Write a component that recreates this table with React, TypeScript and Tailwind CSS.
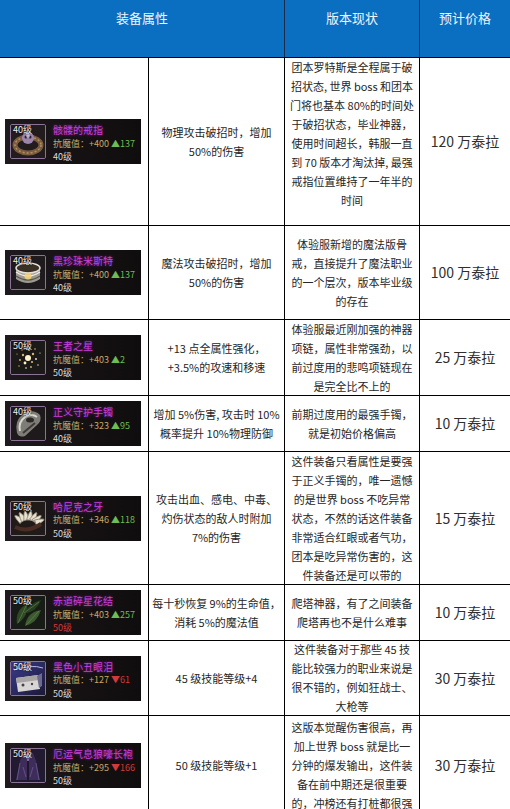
import * as React from 'react';

type Item = {
  name: string;
  level: string;
  stat: string;
  delta: string;
  up: boolean;
  redLevel?: boolean;
  icon: React.ReactNode;
};

type Row = {
  h: string;
  item: Item;
  effect: string[];
  status: string[];
  statusTop?: boolean;
  price: string;
};

const FONT = "font-['Noto_Sans_CJK_SC','Noto_Sans',sans-serif]";

function RingIcon() {
  return (
    <svg viewBox="0 0 34 33" className="h-full w-full">
      <rect width="34" height="33" fill="#231c1f" />
      <ellipse cx="17" cy="20" rx="13" ry="8" fill="none" stroke="#7a5c3e" strokeWidth="5" />
      <ellipse cx="17" cy="20" rx="13" ry="8" fill="none" stroke="#b48f62" strokeWidth="1.5" strokeDasharray="2 2" />
      <circle cx="17" cy="13" r="6" fill="#9c84ad" />
      <circle cx="15" cy="12" r="1.5" fill="#2b1f30" />
      <circle cx="19" cy="12" r="1.5" fill="#2b1f30" />
      <circle cx="17" cy="11" r="2" fill="#e6dcef" opacity="0.6" />
    </svg>
  );
}

function SilverRingIcon() {
  return (
    <svg viewBox="0 0 34 33" className="h-full w-full">
      <rect width="34" height="33" fill="#1f1a1d" />
      <path d="M5 12 L5 23 Q17 31 29 23 L29 12 Z" fill="#9d9a90" />
      <ellipse cx="17" cy="12" rx="12" ry="5" fill="#3a3025" stroke="#e2e0d8" strokeWidth="1.5" />
      <path d="M5 16 Q17 24 29 16" fill="none" stroke="#f0eee6" strokeWidth="1.5" />
      <path d="M5 20 Q17 28 29 20" fill="none" stroke="#5a5850" strokeWidth="1.5" />
      <circle cx="17" cy="20" r="3.5" fill="#f6d47a" opacity="0.85" />
    </svg>
  );
}

function StarIcon() {
  const dots = [
    [17, 17, 3], [12, 14, 1.2], [22, 13, 1.2], [14, 22, 1.4], [21, 21, 1.1], [9, 19, 0.9],
    [25, 18, 0.9], [18, 9, 1], [11, 9, 0.7], [27, 24, 0.7], [8, 25, 0.7], [24, 8, 0.8],
    [15, 27, 0.8], [20, 26, 0.9], [6, 13, 0.6], [29, 12, 0.6],
  ];
  return (
    <svg viewBox="0 0 34 33" className="h-full w-full">
      <rect width="34" height="33" fill="#1c1a18" />
      {dots.map(([x, y, r], i) => (
        <circle key={i} cx={x} cy={y} r={r} fill={i % 3 === 0 ? '#fff4c8' : '#d8b86a'} />
      ))}
    </svg>
  );
}

function BangleIcon() {
  return (
    <svg viewBox="0 0 34 33" className="h-full w-full">
      <rect width="34" height="33" fill="#1e1a1c" />
      <path d="M6 26 Q3 14 12 7 Q22 1 29 8 Q31 14 26 18 L14 29 Q8 31 6 26 Z" fill="#7f7d78" />
      <path d="M9 24 Q7 15 14 10 Q21 6 26 10" fill="none" stroke="#d9d7d0" strokeWidth="2" />
      <path d="M12 26 L24 16" stroke="#3d3a36" strokeWidth="2" />
      <ellipse cx="19" cy="13" rx="4" ry="2.5" fill="#2c2826" />
    </svg>
  );
}

function FangIcon() {
  const fangs = [-50, -30, -10, 10, 30, 50, 70];
  return (
    <svg viewBox="0 0 34 33" className="h-full w-full">
      <rect width="34" height="33" fill="#201a18" />
      {fangs.map((a, i) => (
        <path
          key={i}
          d="M-2 0 Q0 -14 2 0 Z"
          fill="#e8e2d2"
          stroke="#8f8674"
          strokeWidth="0.6"
          transform={`translate(${17 + Math.sin((a * Math.PI) / 180) * 8} ${22 - Math.cos((a * Math.PI) / 180) * 4}) rotate(${a}) scale(1.4 1.3)`}
        />
      ))}
      <path d="M4 25 Q17 31 30 22" fill="none" stroke="#4a2c22" strokeWidth="4" />
    </svg>
  );
}

function LeafIcon() {
  return (
    <svg viewBox="0 0 34 33" className="h-full w-full">
      <rect width="34" height="33" fill="#181c16" />
      <path d="M6 28 Q4 14 16 8 Q18 20 6 28 Z" fill="#2f4a26" />
      <path d="M14 30 Q16 16 30 14 Q26 27 14 30 Z" fill="#3b5a2f" />
      <path d="M12 18 Q20 6 30 4 Q26 16 12 18 Z" fill="#26401f" />
      <path d="M7 27 L15 10 M15 29 L28 15 M13 17 L28 6" stroke="#6e8c55" strokeWidth="0.6" />
    </svg>
  );
}

function ClownIcon() {
  return (
    <svg viewBox="0 0 34 33" className="h-full w-full">
      <defs>
        <linearGradient id="cl" x1="0" y1="0" x2="1" y2="1">
          <stop offset="0" stopColor="#3a3c8a" />
          <stop offset="1" stopColor="#1b1838" />
        </linearGradient>
      </defs>
      <rect width="34" height="33" fill="url(#cl)" />
      <path d="M3 8 Q20 2 32 6" fill="none" stroke="#b6b8e8" strokeWidth="1" />
      <path d="M5 16 L27 13 L29 27 L7 30 Z" fill="#d8d6d4" />
      <path d="M5 16 L27 13 L28 18 L6 21 Z" fill="#a8a4a6" />
      <circle cx="12" cy="23" r="1.5" fill="#4a3d45" />
      <circle cx="21" cy="22" r="1.2" fill="#4a3d45" />
      <path d="M26 14 L31 11 L31 24 L28 26" fill="#6d6a90" />
    </svg>
  );
}

function RobeIcon() {
  return (
    <svg viewBox="0 0 34 33" className="h-full w-full">
      <rect width="34" height="33" fill="#221a30" />
      <path d="M12 4 L22 4 L25 12 L29 31 L5 31 L9 12 Z" fill="#3e2d5a" />
      <path d="M14 4 L17 12 L20 4" fill="none" stroke="#8a78b0" strokeWidth="1" />
      <path d="M17 12 L17 31" stroke="#16101f" strokeWidth="1.5" />
      <path d="M9 14 L6 31 M25 14 L28 31" stroke="#6b5a90" strokeWidth="0.8" />
      <path d="M12 18 L15 28 M22 18 L19 28" stroke="#7a66a8" strokeWidth="0.6" />
    </svg>
  );
}

const rows: Row[] = [
  {
    h: 'h-[168px]',
    item: { name: '骸髅的戒指', level: '40级', stat: '+400', delta: '137', up: true, icon: <RingIcon /> },
    effect: ['物理攻击破招时，增加', '50%的伤害'],
    status: [
      '团本罗特斯是全程属于破',
      '招状态, 世界 boss 和团本',
      '门将也基本 80%的时间处',
      '于破招状态，毕业神器，',
      '使用时间超长，韩服一直',
      '到 70 版本才淘汰掉, 最强',
      '戒指位置维持了一年半的',
      '时间',
    ],
    statusTop: true,
    price: '120 万泰拉',
  },
  {
    h: 'h-[94px]',
    item: { name: '黑珍珠米斯特', level: '40级', stat: '+400', delta: '137', up: true, icon: <SilverRingIcon /> },
    effect: ['魔法攻击破招时，增加', '50%的伤害'],
    status: ['体验服新增的魔法版骨', '戒，直接提升了魔法职业', '的一个层次，版本毕业级', '的存在'],
    price: '100 万泰拉',
  },
  {
    h: 'h-[76px]',
    item: { name: '王者之星', level: '50级', stat: '+403', delta: '2', up: true, icon: <StarIcon /> },
    effect: ['+13 点全属性强化，', '+3.5%的攻速和移速'],
    status: ['体验服最近刚加强的神器', '项链，属性非常强劲，以', '前过度用的悲鸣项链现在', '是完全比不上的'],
    price: '25 万泰拉',
  },
  {
    h: 'h-[56px]',
    item: { name: '正义守护手镯', level: '40级', stat: '+323', delta: '95', up: true, icon: <BangleIcon /> },
    effect: ['增加 5%伤害, 攻击时 10%', '概率提升 10%物理防御'],
    status: ['前期过度用的最强手镯，', '就是初始价格偏高'],
    price: '10 万泰拉',
  },
  {
    h: 'h-[133px]',
    item: { name: '哈尼克之牙', level: '50级', stat: '+346', delta: '118', up: true, icon: <FangIcon /> },
    effect: ['攻击出血、感电、中毒、', '灼伤状态的敌人时附加', '7%的伤害'],
    status: [
      '这件装备只看属性是要强',
      '于正义手镯的，唯一遗憾',
      '的是世界 boss 不吃异常',
      '状态，不然的话这件装备',
      '非常适合红眼或者气功，',
      '团本是吃异常伤害的，这',
      '件装备还是可以带的',
    ],
    price: '15 万泰拉',
  },
  {
    h: 'h-[56px]',
    item: { name: '赤道碎星花结', level: '50级', stat: '+403', delta: '257', up: true, redLevel: true, icon: <LeafIcon /> },
    effect: ['每十秒恢复 9%的生命值，', '消耗 5%的魔法值'],
    status: ['爬塔神器，有了之间装备', '爬塔再也不是什么难事'],
    price: '10 万泰拉',
  },
  {
    h: 'h-[75px]',
    item: { name: '黑色小丑眼泪', level: '50级', stat: '+127', delta: '61', up: false, icon: <ClownIcon /> },
    effect: ['45 级技能等级+4'],
    status: ['这件装备对于那些 45 技', '能比较强力的职业来说是', '很不错的，例如狂战士、', '大枪等'],
    price: '30 万泰拉',
  },
  {
    h: 'h-[100px]',
    item: { name: '厄运气息狼嚎长袍', level: '50级', stat: '+295', delta: '166', up: false, icon: <RobeIcon /> },
    effect: ['50 级技能等级+1'],
    status: [
      '这版本觉醒伤害很高，再',
      '加上世界 boss 就是比一',
      '分钟的爆发输出，这件装',
      '备在前中期还是很重要',
      '的，冲榜还有打桩都很强',
    ],
    price: '30 万泰拉',
  },
];

function ItemCard({ item }: { item: Item }) {
  return (
    <div className="ml-[5px] flex h-[45px] w-[136px] bg-gradient-to-r from-[#1e1a1d] via-[#161214] to-[#100d0f] pl-[5px]">
      <div className="relative mt-[5px] h-[35px] w-[36px] shrink-0 overflow-hidden rounded-[2px] border border-[#8a7396]">
        {item.icon}
        <span className="absolute left-[2px] top-[-1px] text-[9px] leading-[12px] text-[#f2f0f0] [text-shadow:0_0_2px_#000]">
          {item.level}
        </span>
      </div>
      <div className="ml-[7px] flex min-w-0 flex-col pt-[4px] whitespace-nowrap">
        <span className="text-[10px] leading-[13.5px] text-[#c83fdc] [text-shadow:0_0_3px_#7a1f96]">
          {item.name}
        </span>
        <span className="text-[9px] leading-[13.5px]">
          <span className="text-[#c9a768]">抗魔值：{item.stat}</span>{' '}
          {item.up ? (
            <span className="text-[#6cbd55]">▲{item.delta}</span>
          ) : (
            <span className="text-[#d23a3a]">▼{item.delta}</span>
          )}
        </span>
        <span className={`text-[9px] leading-[13.5px] ${item.redLevel ? 'text-[#d33a3a]' : 'text-[#dcdcdc]'}`}>
          {item.level}
        </span>
      </div>
    </div>
  );
}

function Lines({ lines }: { lines: string[] }) {
  return (
    <div className="flex flex-col items-center">
      {lines.map((l, i) => (
        <span key={i} className="whitespace-nowrap text-[11px] leading-[19px] text-[#262626]">
          {l}
        </span>
      ))}
    </div>
  );
}

export default function App() {
  return (
    <div className={`h-[809px] w-[510px] overflow-hidden bg-white ${FONT}`}>
      <div className="grid h-[58px] grid-cols-[285px_135px_90px] border-b border-black bg-[#0a6fc1] text-[13px] leading-[18px] text-[#eef4fb]">
        <div className="border-r border-[#1b2b4d] pt-[9px] text-center">装备属性</div>
        <div className="border-r border-[#1b2b4d] pt-[9px] text-center">版本现状</div>
        <div className="pt-[9px] text-center">预计价格</div>
      </div>

      {rows.map((r, i) => (
        <div key={i} className={`grid grid-cols-[149px_136px_135px_90px] border-b border-black ${r.h}`}>
          <div className="flex items-center border-r border-black">
            <ItemCard item={r.item} />
          </div>
          <div className="flex items-center justify-center border-r border-black">
            <Lines lines={r.effect} />
          </div>
          <div
            className={`flex justify-center overflow-hidden border-r border-black ${
              r.statusTop ? 'items-start' : 'items-center'
            }`}
          >
            <Lines lines={r.status} />
          </div>
          <div className="flex items-center justify-center text-[14px] font-normal text-[#2e2e2e]">{r.price}</div>
        </div>
      ))}
    </div>
  );
}
